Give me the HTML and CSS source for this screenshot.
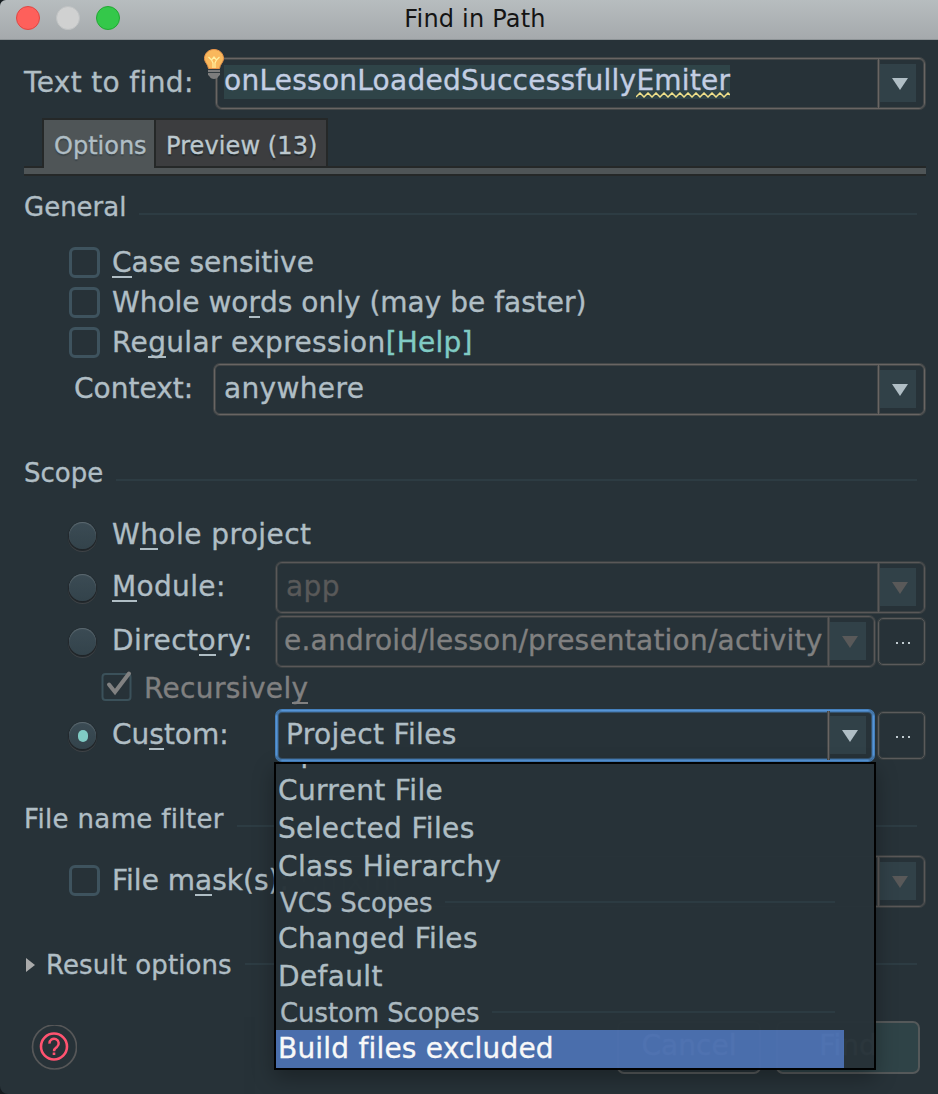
FILE: index.html
```html
<!DOCTYPE html>
<html lang="en">
<head>
<meta charset="utf-8">
<title>Find in Path</title>
<link rel="stylesheet" href="styles.css">
</head>
<body>
<div class="window">
  <header class="titlebar">
    <div class="lights"><i class="light red"></i><i class="light gray"></i><i class="light green"></i></div>
    <h1>Find in Path</h1>
  </header>
  <main>
    <div class="row find">
      <label class="label wide">Text to find:</label>
      <div class="combo search">
        <div class="value"><span class="selected">onLessonLoadedSuccessfully<span class="typo">Emiter<svg class="wave" width="94" height="6" viewBox="0 0 94 6"><path d="M0 5l4-4 4 4 4-4 4 4 4-4 4 4 4-4 4 4 4-4 4 4 4-4 4 4 4-4 4 4 4-4 4 4 4-4 4 4 4-4 4 4 4-4 4 4 4-4 2 2"/></svg></span></span></div>
        <div class="drop"><i></i></div>
        <svg class="bulb" width="22" height="32" viewBox="0 0 22 32"><path d="M11 1.500c-5.500 0-9.500 4-9.500 9 0 4 3.500 5.500 4 10h11c.5-4.500 4-6 4-10 0-5-4-9-9.500-9z" fill="#f9b85c" stroke="#e8944a"/><path d="M5.500 9l3 3 2.500-3 2.500 3 3-3M8.500 12l1.500 3v5M13.500 12l-1.500 3v5" fill="none" stroke="#fff0a0" stroke-width="1.200"/><path d="M5 21h12v6c-2 1-2 4-6 4s-4-3-6-4z" fill="#7d7d7d"/><path d="M5 21.500h12M5 24.500h12" stroke="#333c40"/></svg>
      </div>
    </div>
    <nav class="tabs"><span class="tab active">Options</span><span class="tab">Preview (13)</span></nav>
    <div class="strip"></div>

    <h2 class="section general"><span>General</span></h2>
    <div class="checks">
      <label class="row check"><i class="box"></i><span><u>C</u>ase sensitive</span></label>
      <label class="row check"><i class="box"></i><span>Whole wo<u>r</u>ds only (may be faster)</span></label>
      <label class="row check"><i class="box"></i><span><span class="wide">Re<u>g</u>ular expression</span><a>[Help]</a></span></label>
    </div>
    <div class="row context">
      <label class="label">Context:</label>
      <div class="combo"><div class="value wide">anywhere</div><div class="drop"><i></i></div></div>
    </div>

    <h2 class="section scope"><span>Scope</span></h2>
    <label class="row whole"><i class="radio"></i><span class="wider">W<u>h</u>ole project</span></label>
    <div class="row module">
      <i class="radio"></i><label class="option wide"><u>M</u>odule:</label>
      <div class="combo disabled faint"><div class="value wide">app</div><div class="drop"><i></i></div></div>
    </div>
    <div class="row directory">
      <i class="radio"></i><label class="option wider">Direct<u>o</u>ry:</label>
      <div class="combo disabled path"><div class="value">e.android/lesson/presentation/activity</div><div class="drop"><i></i></div></div>
      <button class="more"><i></i><i></i><i></i></button>
    </div>
    <label class="row recursive">
      <svg width="34" height="34" viewBox="0 0 34 34"><rect x="2.500" y="4" width="28" height="26" rx="3" fill="none" stroke="#3b515a" stroke-width="2"/><path d="M9 14.500l6 7.500L29 3.500" fill="none" stroke="#818181" stroke-width="4" stroke-linecap="round"/></svg>
      <span class="wide">Recursivel<u>y</u></span>
    </label>
    <div class="row custom">
      <i class="radio on"></i><label class="option">Cu<u>s</u>tom:</label>
      <div class="combo focused"><div class="value wide">Project Files</div><div class="drop"><i></i></div></div>
      <button class="more"><i></i><i></i><i></i></button>
      <div class="popup">
        <div class="list">
          <div class="item">Open Files</div>
          <div class="item">Current File</div>
          <div class="item">Selected Files</div>
          <div class="item">Class Hierarchy</div>
          <div class="group"><span>VCS Scopes</span></div>
          <div class="item">Changed Files</div>
          <div class="item">Default</div>
          <div class="group"><span>Custom Scopes</span></div>
          <div class="item current">Build files excluded</div>
        </div>
      </div>
    </div>

    <h2 class="section filter"><span class="wide">File name filter</span></h2>
    <div class="row mask">
      <i class="box"></i><label class="option">File m<u>a</u>sk(s):</label>
      <div class="combo disabled faint"><div class="value">*.mxml</div><div class="drop"><i></i></div></div>
    </div>
    <h2 class="section result"><svg width="10" height="14" viewBox="0 0 10 14"><path d="M0 0l9 7-9 7z" fill="#aaabab"/></svg><span>Result options</span></h2>

    <footer class="actions">
      <svg class="help" width="46" height="46" viewBox="0 0 46 46"><circle cx="23.500" cy="22" r="22" fill="none" stroke="#565758" stroke-width="1.700"/><circle cx="23" cy="21.500" r="13" fill="none" stroke="#ff5370" stroke-width="2.600"/><path d="M18.500 18.700a4.600 4.600 0 1 1 7.500 3.200c-2 1.500-3 2-3 4.400" fill="none" stroke="#ff5370" stroke-width="2.500"/><path d="M21.700 27.500h2.600v2.500h-2.600z" fill="#ff5370"/></svg>
      <button class="action">Cancel</button>
      <button class="action primary">Find</button>
    </footer>
  </main>
</div>
</body>
</html>
```

FILE: styles.css
```css
* { box-sizing: border-box; }
body { margin: 0; background: #161c20; font: 28px/32px "DejaVu Sans", sans-serif; color: #b0bec5; }
.window { width: 938px; height: 1094px; overflow: hidden; background: #273238; border-radius: 6px 0 0 8px; }
.titlebar { position: relative; height: 40px; background: linear-gradient(#b7bdbf, #a5a9ac); border-bottom: 1px solid #8e9497; display: flex; align-items: center; justify-content: center; }
.titlebar h1 { margin: 0 0 2px 12px; font-size: 24px; font-weight: 400; line-height: 30px; letter-spacing: .2px; color: #141414; }
.lights { position: absolute; left: 16px; top: 6px; display: flex; gap: 16px; }
.light { width: 24px; height: 24px; border-radius: 50%; border: 1px solid; }
.red { background: #fe605b; border-color: #df4744; }
.gray { background: #d0d1d1; border-color: #bfc2c3; }
.green { background: #34c84a; border-color: #22a833; }
main { padding: 18px 13px 0 24px; -webkit-text-stroke: .35px currentColor; }
.row { display: flex; align-items: center; white-space: pre; }
.row > span, .label, .option, .value { padding-bottom: 2px; }
.wide { letter-spacing: .35px; }
.wider { letter-spacing: .45px; }
u { text-decoration: none; display: inline-block; height: 31px; border-bottom: 2px solid currentColor; line-height: 32px; vertical-align: top; }

.combo { position: relative; flex: 1; min-width: 0; display: flex; height: 51px; border: 1px solid #696563; border-radius: 6px; box-shadow: 0 0 0 1px #434748, inset 0 0 0 1px #434748; }
.value { flex: 1; min-width: 0; display: flex; align-items: center; padding-left: 9px; overflow: hidden; }
.drop { width: 46px; border-left: 1px solid #696563; box-shadow: -1px 0 #434748, inset 1px 0 #434748; padding: 5px 0 0 1px; }
.drop i { display: block; width: 36px; height: 38px; background: #314148; }
.drop i::after { content: ""; display: block; width: 16px; height: 12px; background: #b0bec5; clip-path: polygon(0 0, 100% 0, 50% 100%); transform: translate(12px, 14px); }
.disabled { color: #808080; border-color: #5a5858; box-shadow: 0 0 0 1px #3b4143, inset 0 0 0 1px #3b4143; }
.disabled .drop { border-color: #5a5858; }
.disabled .drop i::after { background: #595959; }
.faint { color: #595959; }
.focused { margin-right: 1px; border-color: #5795d6; box-shadow: 0 0 0 1px #4480bd, inset 0 0 0 1px #477fb9, inset 0 0 0 2px #35526c; }
.focused .drop { width: 45px; }
.path .value { padding-left: 7px; letter-spacing: .22px; }

.find { height: 51px; }
.find .label { width: 192px; }
.search .value { padding: 0 0 4px 7px; overflow: visible; }
.selected { background: #2f4448; color: #c3cee3; height: 34px; line-height: 32px; letter-spacing: .25px; }
.typo { position: relative; }
.wave { position: absolute; left: 0; bottom: -1px; }
.wave path { fill: none; stroke: #f0e08a; stroke-width: 1.500; }
.bulb { position: absolute; left: -14px; top: -11px; }

.tabs { display: flex; margin: 9px 0 0 18px; height: 50px; font-size: 24px; }
.tab { border: 2px solid #252828; background: #3c3d3f; height: 50px; line-height: 50px; width: 174px; padding: 1px 0 0 10px; letter-spacing: .1px; white-space: pre; text-shadow: 0 2px 1px #22282b; color: #bcc8ce; }
.tab + .tab { margin-left: -2px; }
.tab.active { width: 114px; background: #4f5557; border-bottom: 0; color: #b0bec5; letter-spacing: 0; text-shadow: 0 2px 1px #3b4448; }
.strip { height: 10px; margin: -2px -1px 0 0; border: solid #252828; border-width: 2px 0; background: #4f5557; }
.strip::before { content: ""; display: block; width: 110px; height: 2px; margin-left: 20px; background: #4f5557; transform: translateY(-2px); }

.section { display: flex; align-items: center; height: 40px; margin: 0; font-size: 26px; font-weight: 400; white-space: pre; }
.section::after { content: ""; flex: 1; height: 2px; margin: 14px 8px 0 13px; background: #2d3c43; }
.general { margin-top: 11px; }
.checks { padding: 15px 0 0 45px; }
.check { height: 40px; }
.row.check > span { padding: 2px 0 0; }
.box { width: 31px; height: 31px; border: 3px solid #3e535e; border-radius: 6px; }
.check .box { margin-right: 12px; }
a { color: #80cbc4; letter-spacing: .2px; }
.context { margin: 2px 0 0 50px; }
.context .label { width: 140px; }

.scope { margin-top: 38px; }
.radio { width: 27px; height: 27px; flex: none; border-radius: 50%; margin: 0 16px 0 45px; background: linear-gradient(#3b4b54, #33434b); box-shadow: inset 0 1px 1px #5d6a71, 0 1px 1px 1px #1f2529, 0 2px 0 1px #43474a; position: relative; }
.radio.on::after { content: ""; position: absolute; left: 9px; top: 8px; width: 10px; height: 12px; border-radius: 5px; background: #80cbc4; }
.whole { margin-top: 21px; height: 40px; }
.whole .radio { margin-top: 2px; }
.row.whole > span { padding: 2px 0 0; }
.option { width: 164px; flex: none; }
.module { margin-top: 8px; }
.directory { margin-top: 3px; }
.more { width: 47px; height: 47px; margin: 0 0 1px 3px; padding: 3px 0 0 3px; border: 1px solid #5b5b5b; border-radius: 5px; background: none; box-shadow: 0 0 0 1px #373e40, inset 0 0 0 1px #373e40; display: flex; align-items: center; justify-content: center; gap: 4px; }
.more i { width: 2px; height: 2px; background: #c0cbd0; }
.recursive { height: 43px; padding-left: 76px; color: #808080; }
.recursive svg { margin-right: 10px; margin-bottom: 3px; }
.row.recursive > span { padding: 0; }
.custom { position: relative; }

.popup { position: absolute; z-index: 2; left: 250px; top: 52px; width: 602px; height: 308px; border: 2px solid #000; background: #273238; opacity: .97; box-shadow: 0 8px 20px rgba(0, 0, 0, .3); overflow: hidden; display: flex; flex-direction: column; justify-content: flex-end; white-space: nowrap; }
.list { width: 568px; flex: none; }
.item { height: 38px; line-height: 36px; padding: 1px 0 0 2px; letter-spacing: .35px; color: #b4c2c9; }
.item.current { background: #4c70b0; color: #fff; letter-spacing: .2px; }
.group { height: 34px; display: flex; align-items: center; padding: 0 0 0 4px; font-size: 26px; }
.group::after { content: ""; flex: 1; height: 2px; margin: -2px 9px 0 13px; background: #2d3c43; }
.group span { letter-spacing: -.1px; }

.filter { margin-top: 38px; }
.mask { margin-top: 17px; }
.mask .box { margin: 0 12px 2px 45px; }
.mask .value { padding-left: 20px; }
.result { margin-top: 38px; }
.result svg { margin: 0 10px 0 2px; }
.result span { letter-spacing: .1px; }
.result::after { margin-top: -2px; }
.actions { display: flex; align-items: center; margin-top: 36px; gap: 15px; padding-right: 5px; }
.help { margin: 0 auto 0 7px; }
.action { width: 144px; height: 53px; padding: 0 0 3px; font: inherit; color: #b0bec5; background: #273238; border: 2px solid #55595a; border-radius: 7px; }
.primary { background: #2f4347; }
```
